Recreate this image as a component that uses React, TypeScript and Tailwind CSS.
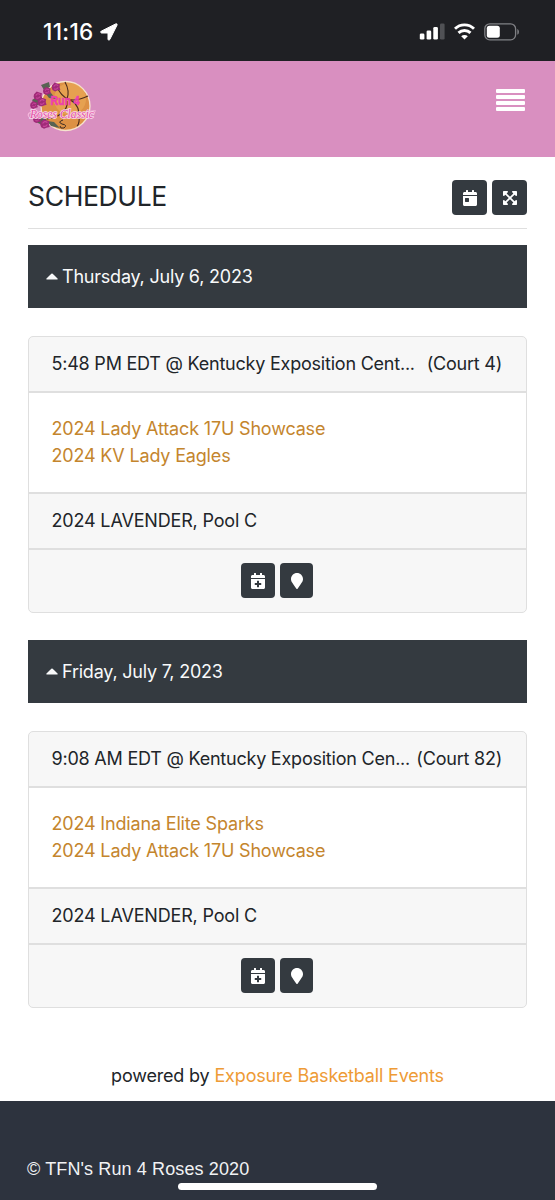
import React from 'react';
import {
  FaCalendarDay,
  FaCalendarPlus,
  FaExpandArrowsAlt,
  FaMapMarker,
} from 'react-icons/fa';

interface Game {
  date: string;
  place: string;
  court: string;
  teams: string[];
  pool: string;
}

const games: Game[] = [
  {
    date: 'Thursday, July 6, 2023',
    place: '5:48 PM EDT @ Kentucky Exposition Cent...',
    court: '(Court 4)',
    teams: ['2024 Lady Attack 17U Showcase', '2024 KV Lady Eagles'],
    pool: '2024 LAVENDER, Pool C',
  },
  {
    date: 'Friday, July 7, 2023',
    place: '9:08 AM EDT @ Kentucky Exposition Cen...',
    court: '(Court 82)',
    teams: ['2024 Indiana Elite Sparks', '2024 Lady Attack 17U Showcase'],
    pool: '2024 LAVENDER, Pool C',
  },
];

const StatusBar: React.FC = () => (
  <div className="flex h-[61px] items-center justify-between bg-[#1f2024] pt-[2px] pr-[35px] pl-[43px] text-white">
    <div className="flex items-center gap-[6px]">
      <span className="pt-px text-[22.5px] leading-none font-medium tracking-[0.3px]">11:16</span>
      <svg width="18" height="18" viewBox="0 0 18 18" fill="#fff" stroke="#fff" strokeLinejoin="round">
        <path d="M1.2 8.2 15.7.9q1.9-.6 1.3 1.3L9.8 16.5q-1.1 1.6-1.8-.2V10H1.5q-1.8-.7-.3-1.8z" />
      </svg>
    </div>
    <div className="flex items-center gap-[9px]">
      <svg width="26" height="17" viewBox="0 0 26 17" fill="#fff">
        <rect x="0.8" y="10.5" width="4.6" height="6" rx="1.3" />
        <rect x="7.6" y="7.5" width="4.6" height="9" rx="1.3" />
        <rect x="14.3" y="4" width="4.6" height="12.5" rx="1.3" />
        <rect x="21" y="0.5" width="4.6" height="16" rx="1.3" fill="#505155" />
      </svg>
      <svg width="21" height="17" viewBox="0 0 21 17" fill="none" stroke="#fff" strokeWidth="2.9">
        <path d="M1 5.7a13.6 13.6 0 0 1 19 0" />
        <path d="M4.5 9.9a8.6 8.6 0 0 1 12 0" />
        <path d="M10.5 16.6 7.2 13.3a4.6 4.6 0 0 1 6.6 0z" fill="#fff" stroke="none" />
      </svg>
      <svg width="36" height="18" viewBox="0 0 36 18">
        <rect x="0.8" y="0.8" width="30.8" height="16" rx="5" fill="none" stroke="#808185" strokeWidth="1.3" />
        <rect x="2.8" y="2.8" width="13" height="12" rx="2.5" fill="#fff" />
        <path d="M33.3 6v5.8c2.2-.8 2.2-5 0-5.8z" fill="#808185" />
      </svg>
    </div>
  </div>
);

const Rose: React.FC<{ x: number; y: number; r: number }> = ({ x, y, r }) => (
  <g transform={`translate(${x} ${y}) scale(${r})`}>
    <path
      d="M-.9-.4-.3-1 .3-.8.9-.6.8 0 1 .6.3.8-.2 1-.8.7-1 .1z"
      fill="#a02a78"
    />
    <path d="M-.5-.1Q-.1-.8.5-.3M-.4.4Q.1.7.5.1" fill="none" stroke="#c9479b" strokeWidth=".25" />
  </g>
);

const Logo: React.FC = () => (
  <svg className="overflow-visible tracking-normal" width="76" height="58" viewBox="0 0 76 58">
    <circle cx="38.5" cy="29" r="24.5" fill="#dd9144" stroke="#f6e3cf" strokeWidth="1.3" />
    <circle cx="43" cy="22" r="16" fill="#f0b25c" opacity=".5" />
    <g fill="none" stroke="#4a2a1c" strokeWidth="1.1">
      <path d="M30 10q4 9 11 12t20-3" />
      <path d="M38 5q5 9 2 17" />
      <path d="M40 22q11 3 12 14t-2 13" />
      <path d="M20 42q9-1 15-6t5-12" />
    </g>
    <g fill="#586353">
      <path d="M14 8l8-3 1 5-6 3zM5 23l8-5 4 6-8 5zM9 45l7-6 4 4-5 5zM16 13l8 3 5 6-7-1zM20 44l7 1 6 6-9-2z" />
    </g>
    <Rose x={29} y={10} r={4.4} />
    <Rose x={20} y={14} r={4} />
    <Rose x={11} y={19} r={4.4} />
    <Rose x={15} y={25} r={4.6} />
    <Rose x={7} y={28} r={3.9} />
    <Rose x={10} y={42} r={4} />
    <Rose x={18} y={47} r={4.8} />
    <path d="M36 43q-6 2-1 4 6 1 2 4-4 1-4-2" fill="none" stroke="#3b2b24" strokeWidth="1" />
    <text
      x="23.5"
      y="28"
      fontFamily="'Liberation Sans', sans-serif"
      fontSize="12"
      fontWeight="700"
      textLength="29"
      lengthAdjust="spacingAndGlyphs"
      fill="#ee3fae"
      stroke="#ee3fae"
      strokeWidth=".6"
    >
      Run 4
    </text>
    <path d="M2 40q-3-4 5-6M60 36q5-3 9-2" fill="none" stroke="#f5b8dc" strokeWidth="1.2" />
    <text
      x="3"
      y="40.5"
      fontFamily="'Liberation Serif', serif"
      fontSize="12"
      fontStyle="italic"
      textLength="64"
      lengthAdjust="spacingAndGlyphs"
      fill="#e44fa6"
      stroke="#fbdcee"
      strokeWidth="1.5"
      paintOrder="stroke"
    >
      Roses Classic
    </text>
  </svg>
);

const IconButton: React.FC<{ label: string; className?: string; children: React.ReactNode }> = ({
  label,
  className = 'w-[35px]',
  children,
}) => (
  <button
    aria-label={label}
    className={`${className} flex h-[35px] items-center justify-center rounded-[4px] bg-[#343a40] text-white`}
  >
    {children}
  </button>
);

const GameDay: React.FC<{ game: Game }> = ({ game }) => (
  <section className="mb-[27px]">
    <div className="mb-7 flex h-[63px] items-center gap-1 bg-[#343a40] pl-[18px] tracking-[-0.22px] text-[#f8f9fa]">
      <svg width="12" height="7" viewBox="0 0 12 7" fill="currentColor">
        <path d="M.7 6.5h10.6q.8-.3.2-1L6.7.7Q6 .2 5.3.7L.5 5.5q-.6.7.2 1z" />
      </svg>
      <span>{game.date}</span>
    </div>

    <div className="overflow-hidden rounded-[5px] border border-[#dfdfdf] bg-[#f7f7f7]">
      <div className="flex h-[56px] items-center justify-between border-b-2 border-[#dfdfdf] pr-[24px] pb-[2px] pl-[22.5px] tracking-[-0.22px] whitespace-nowrap">
        <span>{game.place}</span>
        <span>{game.court}</span>
      </div>
      <div className="flex h-[99px] flex-col justify-center bg-white px-[22.5px] pb-px text-[#c4852d]">
        {game.teams.map((team) => (
          <a key={team} className="leading-[27px]">{team}</a>
        ))}
      </div>
      <div className="flex h-[58px] items-center border-y-2 border-[#dfdfdf] px-[22.5px] pb-px">{game.pool}</div>
      <div className="flex h-[62px] items-center justify-center gap-[5px] pr-px pb-px">
        <IconButton label="Add to calendar" className="w-[34px]">
          <FaCalendarPlus size={16} />
        </IconButton>
        <IconButton label="Show on map" className="w-[33px]">
          <FaMapMarker size={16} />
        </IconButton>
      </div>
    </div>
  </section>
);

const App: React.FC = () => (
  <div className="flex h-[1200px] w-[555px] flex-col overflow-hidden bg-white font-[Inter,sans-serif] text-[18px] tracking-[-0.17px] text-[#212529]">
    <StatusBar />

    <header className="flex h-[96px] items-start justify-between bg-[#d98fc0] pr-[30px] pl-[27px]">
      <div className="pt-[16px]">
        <Logo />
      </div>
      <button aria-label="Menu" className="flex flex-col gap-[2px] pt-[28px]">
        <span className="h-[4px] w-[29px] rounded-[1px] bg-white" />
        <span className="h-[4px] w-[29px] rounded-[1px] bg-white" />
        <span className="h-[4px] w-[29px] rounded-[1px] bg-white" />
        <span className="h-[4px] w-[29px] rounded-[1px] bg-white" />
      </button>
    </header>

    <main className="px-7">
      <div className="mb-4 flex h-[72px] items-center justify-between border-b border-[#dfdfdf] pt-[10px]">
        <h1 className="pb-px text-[26.5px] tracking-[-0.35px]">SCHEDULE</h1>
        <div className="flex gap-[5px]">
          <IconButton label="Today">
            <FaCalendarDay size={16} />
          </IconButton>
          <IconButton label="Expand all">
            <FaExpandArrowsAlt size={16} />
          </IconButton>
        </div>
      </div>

      {games.map((game) => (
        <GameDay key={game.date} game={game} />
      ))}

      <p className="pt-[27px] text-center">
        powered by <a className="text-[#ee9b36]">Exposure Basketball Events</a>
      </p>
    </main>

    <footer className="mt-auto flex h-[99px] flex-col bg-[#2d333e] text-[#f1f2f4]">
      <p className="pt-[55px] pl-[27px] font-['Liberation_Sans',Arial,sans-serif] leading-[27px] tracking-[0.12px]">
        © TFN&apos;s Run 4 Roses 2020
      </p>
      <div className="mx-auto h-[7px] w-[199px] rounded-full bg-white" />
    </footer>
  </div>
);

export default App;
